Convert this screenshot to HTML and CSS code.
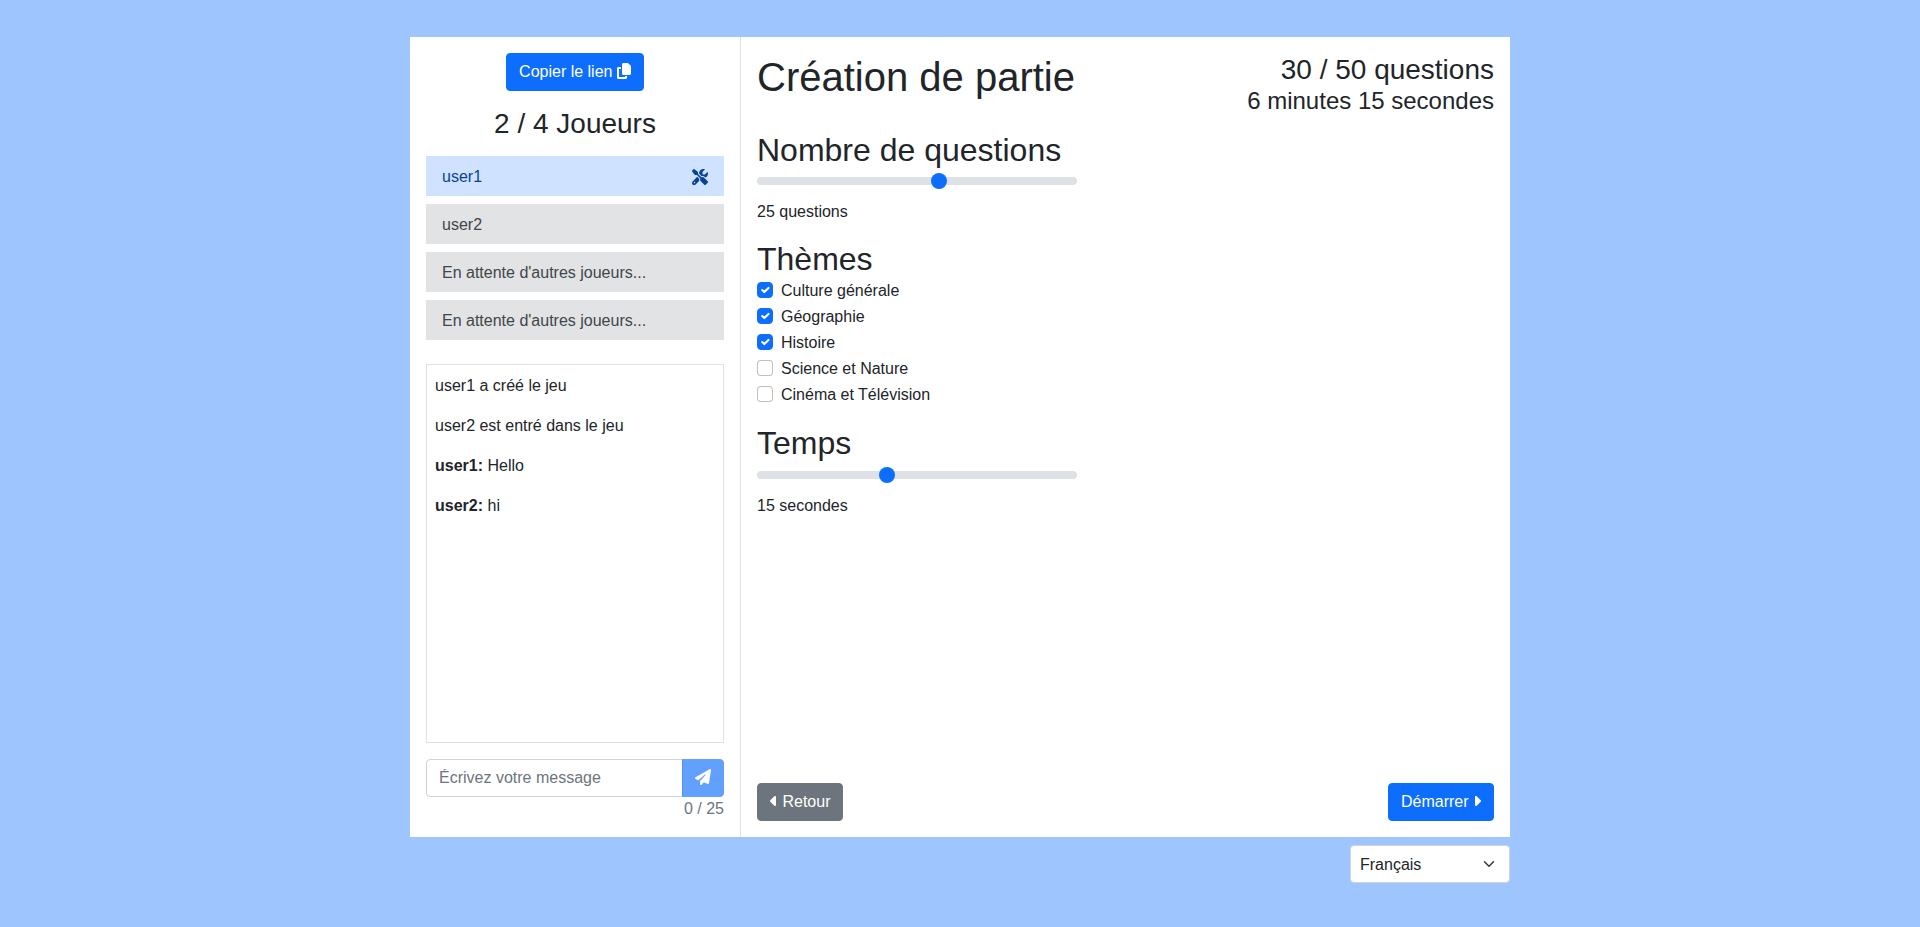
FILE: index.html
```html
<!DOCTYPE html>
<html lang="fr">
  <head>
    <meta charset="UTF-8" />
    <meta name="viewport" content="width=device-width, initial-scale=1.0" />
    <title>Création de partie</title>
    <link rel="stylesheet" href="styles.css">
  </head>
  <body>
    <div class="wrapper">
      <main class="card">
        <aside class="sidebar">
          <button class="btn btn-primary btn-copy" type="button">
            Copier le lien
            <svg class="icon" viewBox="0 0 448 512"><path d="M208 0H332.1c12.7 0 24.9 5.1 33.9 14.1l67.9 67.9c9 9 14.1 21.2 14.1 33.9V336c0 26.5-21.5 48-48 48H208c-26.5 0-48-21.5-48-48V48c0-26.5 21.5-48 48-48zM48 128h80v64H64V448H256V416h64v48c0 26.5-21.5 48-48 48H48c-26.5 0-48-21.5-48-48V176c0-26.5 21.5-48 48-48z"/></svg>
          </button>

          <h3 class="players-title">2 / 4 Joueurs</h3>

          <ul class="player-list">
            <li class="player player-host">
              user1
              <svg class="icon" viewBox="0 0 512 512"><path d="M78.6 5C69.1-2.4 55.6-1.5 47 7L7 47c-8.5 8.5-9.4 22-2.1 31.6l80 104c4.5 5.9 11.6 9.4 19 9.4h54.1l109 109c-14.7 29-10 65.4 14.3 89.6l112 112c12.5 12.5 32.8 12.5 45.3 0l64-64c12.5-12.5 12.5-32.8 0-45.3l-112-112c-24.2-24.2-60.6-29-89.6-14.3l-109-109V104c0-7.5-3.5-14.5-9.4-19L78.6 5zM19.9 396.1C7.2 408.8 0 426.1 0 444.1C0 481.6 30.4 512 67.9 512c18 0 35.3-7.2 48-19.9L233.7 374.3c-7.8-20.9-9-43.6-3.6-65.1l-61.7-61.7L19.9 396.1zM512 144c0-10.5-1.1-20.7-3.2-30.5c-2.4-11.2-16.1-14.1-24.2-6l-63.9 63.9c-3 3-7.1 4.7-11.3 4.7H352c-8.8 0-16-7.2-16-16V102.6c0-4.2 1.7-8.3 4.7-11.3l63.9-63.9c8.1-8.1 5.2-21.8-6-24.2C388.7 1.1 378.5 0 368 0C288.5 0 224 64.5 224 144l0 .8 85.3 85.3c36-9.1 75.8 .5 104 28.7L429 274.5c49-23 83-72.8 83-130.5zM56 432a24 24 0 1 1 48 0 24 24 0 1 1 -48 0z"/></svg>
            </li>
            <li class="player">user2</li>
            <li class="player">En attente d'autres joueurs...</li>
            <li class="player">En attente d'autres joueurs...</li>
          </ul>

          <div class="chat">
            <p>user1 a créé le jeu</p>
            <p>user2 est entré dans le jeu</p>
            <p><strong>user1:</strong> Hello</p>
            <p><strong>user2:</strong> hi</p>
          </div>

          <div class="chat-form">
            <input class="chat-input" type="text" placeholder="Écrivez votre message" />
            <button class="btn btn-primary btn-send" type="button" disabled>
              <svg class="icon" viewBox="0 0 512 512"><path d="M498.1 5.6c10.1 7 15.4 19.1 13.5 31.2l-64 416c-1.5 9.7-7.4 18.2-16 23s-18.9 5.4-28 1.6L284 427.7l-68.5 74.1c-8.9 9.7-22.9 12.9-35.2 8.1S160 493.2 160 480V396.4c0-4 1.5-7.8 4.2-10.7L331.8 202.8c5.8-6.3 5.6-16-.4-22s-15.7-6.4-22-.7L106 360.8 17.7 316.6C7.1 311.3 .3 300.7 0 288.9s5.9-22.8 16.1-28.7l448-256c10.7-6.1 23.9-5.5 34 1.4z"/></svg>
            </button>
          </div>
          <div class="chat-count">0 / 25</div>
        </aside>

        <section class="content">
          <div class="content-header">
            <h1>Création de partie</h1>
            <div class="summary">
              <div class="summary-questions">30 / 50 questions</div>
              <div class="summary-time">6 minutes 15 secondes</div>
            </div>
          </div>

          <div class="setting">
            <h2>Nombre de questions</h2>
            <input class="range" type="range" min="5" max="40" value="25" />
            <p>25 questions</p>
          </div>

          <div class="setting setting-themes">
            <h2>Thèmes</h2>
            <label class="check"><input type="checkbox" checked /> Culture générale</label>
            <label class="check"><input type="checkbox" checked /> Géographie</label>
            <label class="check"><input type="checkbox" checked /> Histoire</label>
            <label class="check"><input type="checkbox" /> Science et Nature</label>
            <label class="check"><input type="checkbox" /> Cinéma et Télévision</label>
          </div>

          <div class="setting">
            <h2>Temps</h2>
            <input class="range" type="range" min="5" max="30" value="15" />
            <p>15 secondes</p>
          </div>

          <div class="content-footer">
            <button class="btn btn-secondary" type="button">
              <svg class="icon" viewBox="0 0 256 512"><path d="M9.4 278.6c-12.5-12.5-12.5-32.8 0-45.3l128-128c9.2-9.2 22.9-11.9 34.9-6.9s19.8 16.6 19.8 29.6l0 256c0 12.9-7.8 24.6-19.8 29.6s-25.7 2.2-34.9-6.9l-128-128z"/></svg>
              Retour
            </button>
            <button class="btn btn-primary" type="button">
              Démarrer
              <svg class="icon" viewBox="0 0 256 512"><path d="M246.6 278.6c12.5-12.5 12.5-32.8 0-45.3l-128-128c-9.2-9.2-22.9-11.9-34.9-6.9s-19.8 16.6-19.8 29.6l0 256c0 12.9 7.8 24.6 19.8 29.6s25.7 2.2 34.9-6.9l128-128z"/></svg>
            </button>
          </div>
        </section>
      </main>

      <select class="lang">
        <option>Français</option>
        <option>English</option>
      </select>
    </div>
  </body>
</html>
```

FILE: styles.css
```css
* {
  box-sizing: border-box;
}

body {
  font-family: "Liberation Sans", Arial, sans-serif;
  font-size: 16px;
  line-height: 1.5;
  background-color: #9ec5fe;
  color: #212529;
  margin: 0;
  padding-top: 37px;
}

h1,
h2,
h3,
p,
ul {
  margin: 0;
  padding: 0;
  font-weight: 500;
}

h1 {
  font-size: 40px;
  line-height: 1.2;
}

h2 {
  font-size: 32px;
  line-height: 1.2;
}

h3 {
  font-size: 28px;
  line-height: 1.2;
}

p {
  font-weight: 400;
}

.wrapper {
  width: 1100px;
  margin: 0 auto;
  display: flex;
  flex-direction: column;
  align-items: flex-end;
}

.card {
  width: 100%;
  height: 800px;
  display: flex;
  background-color: #ffffff;
}

.icon {
  height: 1em;
  fill: currentColor;
  vertical-align: -0.125em;
}

/* Buttons */
.btn {
  font-family: inherit;
  font-size: 16px;
  line-height: 24px;
  height: 38px;
  padding: 6px 12px;
  color: #ffffff;
  border: 1px solid transparent;
  border-radius: 4px;
  cursor: pointer;
}

.btn-primary {
  background-color: #0d6efd;
  border-color: #0d6efd;
}

.btn-secondary {
  background-color: #6c757d;
  border-color: #6c757d;
}

/* Left column */
.sidebar {
  width: 331px;
  padding: 16px;
  border-right: 1px solid #dee2e6;
  display: flex;
  flex-direction: column;
}

.btn-copy {
  align-self: center;
}

.players-title {
  margin: 16px 0 15.4px;
  text-align: center;
}

.player-list {
  list-style: none;
  display: flex;
  flex-direction: column;
  gap: 8px;
  margin-bottom: 24px;
}

.player {
  display: flex;
  justify-content: space-between;
  align-items: center;
  height: 40px;
  padding: 9px 16px 7px;
  background-color: #e2e3e5;
  color: #41464b;
}

.player-host {
  background-color: #cfe2ff;
  color: #084298;
}

.chat {
  flex: 1;
  padding: 9px 8px 7px;
  border: 1px solid #dee2e6;
  overflow-y: auto;
}

.chat p {
  margin-bottom: 16px;
}

.chat strong {
  font-weight: 700;
}

.chat-form {
  display: flex;
  margin-top: 16px;
}

.chat-input {
  flex: 1;
  min-width: 0;
  height: 38px;
  padding: 6px 12px;
  font-family: inherit;
  font-size: 16px;
  color: #212529;
  border: 1px solid #ced4da;
  border-radius: 4px 0 0 4px;
}

.chat-input::placeholder {
  color: #6c757d;
}

.btn-send {
  width: 42px;
  margin-left: -1px;
  border-radius: 0 4px 4px 0;
  cursor: default;
  opacity: 0.65;
}

.chat-count {
  text-align: right;
  color: #6c757d;
}

/* Right column */
.content {
  flex: 1;
  padding: 16px;
  display: flex;
  flex-direction: column;
}

.content-header {
  display: flex;
  justify-content: space-between;
  margin-bottom: 15.4px;
}

.summary {
  text-align: right;
  line-height: 1.2;
}

.summary-questions {
  font-size: 28px;
}

.summary-time {
  font-size: 24px;
}

.setting {
  margin-bottom: 16px;
}

.setting-themes {
  margin-bottom: 15.8px;
}

.range {
  display: block;
  width: 320px;
  height: 24px;
  margin: 0 0 7px;
  padding: 0;
  background: transparent;
  appearance: none;
  -webkit-appearance: none;
}

.range::-webkit-slider-runnable-track {
  height: 8px;
  background-color: #dee2e6;
  border-radius: 16px;
}

.range::-webkit-slider-thumb {
  -webkit-appearance: none;
  width: 16px;
  height: 16px;
  margin-top: -4px;
  background-color: #0d6efd;
  border-radius: 50%;
}

.check {
  display: block;
  min-height: 24px;
  margin-bottom: 2px;
  padding-left: 24px;
}

.check input {
  float: left;
  width: 16px;
  height: 16px;
  margin: 3.4px 0 0 -24px;
  background-color: #ffffff;
  border: 1px solid rgba(0, 0, 0, 0.25);
  border-radius: 4px;
  appearance: none;
  -webkit-appearance: none;
}

.check input:checked {
  background-color: #0d6efd;
  border-color: #0d6efd;
  background-size: 100% 100%;
  background-image: url("data:image/svg+xml,%3csvg xmlns='http://www.w3.org/2000/svg' viewBox='0 0 20 20'%3e%3cpath fill='none' stroke='%23fff' stroke-linecap='round' stroke-linejoin='round' stroke-width='3' d='m6 10 3 3 6-6'/%3e%3c/svg%3e");
}

.content-footer {
  margin-top: auto;
  display: flex;
  justify-content: space-between;
}

/* Language picker */
.lang {
  width: 160px;
  height: 38px;
  margin-top: 8px;
  padding: 6px 36px 6px 9px;
  font-family: inherit;
  font-size: 16px;
  color: #212529;
  border: 1px solid #ced4da;
  border-radius: 4px;
  background-color: #ffffff;
  background-repeat: no-repeat;
  background-position: right 12px center;
  background-size: 16px 12px;
  background-image: url("data:image/svg+xml,%3csvg xmlns='http://www.w3.org/2000/svg' viewBox='0 0 16 16'%3e%3cpath fill='none' stroke='%23343a40' stroke-linecap='round' stroke-linejoin='round' stroke-width='2' d='m2 5 6 6 6-6'/%3e%3c/svg%3e");
  appearance: none;
  -webkit-appearance: none;
}
```
